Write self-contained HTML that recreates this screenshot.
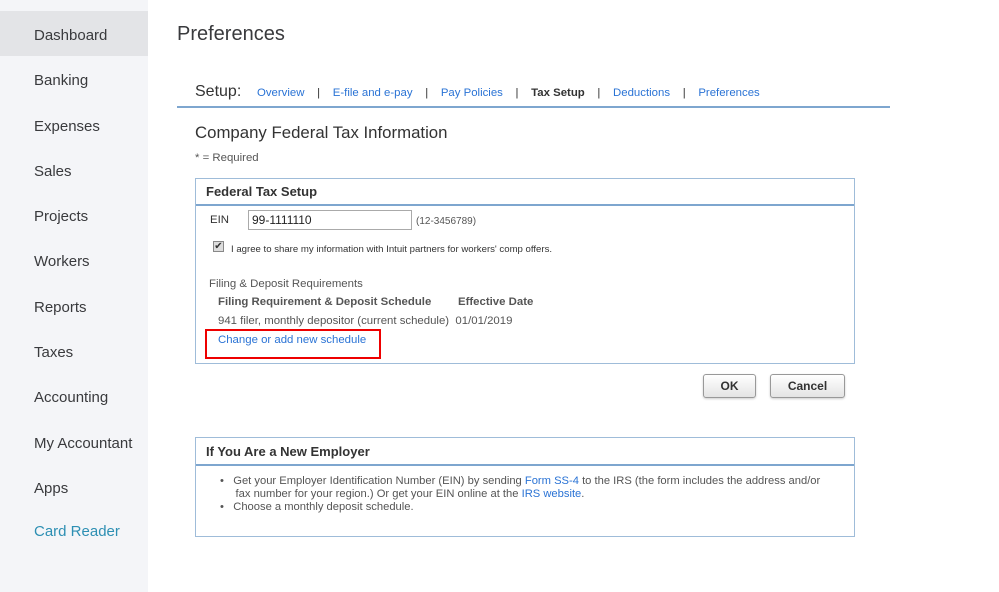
<!DOCTYPE html>
<html><head><style>
*{margin:0;padding:0;box-sizing:border-box}
body{width:999px;height:592px;background:#fff;font-family:"Liberation Sans",Arial,sans-serif;position:relative;overflow:hidden;color:#333}
.sb{position:absolute;left:0;top:0;width:148px;height:592px;background:#f4f5f8}
.sb .t{position:absolute;left:34px;font-size:15px;color:#393a3d;line-height:20px}
.hl{position:absolute;left:0;top:11px;width:148px;height:45px;background:#e3e4e7}
.a{position:absolute;white-space:nowrap}
.lk{color:#2a73d5}
.box{position:absolute;border:1px solid #9fbcd9}
.bh{position:absolute;left:0;right:0;top:0;border-bottom:2px solid #7ea6cf;font-weight:bold;font-size:13px;color:#333;padding-left:10px}
.s12{font-size:11.4px}
.btn{position:absolute;border:1px solid #999;border-radius:3px;background:linear-gradient(#fff,#e4e4e4);font-size:12px;font-weight:bold;text-align:center;line-height:22px;color:#333;box-shadow:0 1px 2px rgba(0,0,0,.2)}
</style></head><body>
<div class="sb">
<div class="hl"></div>
<div class="t" style="top:26px">Dashboard</div>
<div class="t" style="top:71px">Banking</div>
<div class="t" style="top:117px">Expenses</div>
<div class="t" style="top:162px">Sales</div>
<div class="t" style="top:207px">Projects</div>
<div class="t" style="top:252px">Workers</div>
<div class="t" style="top:298px">Reports</div>
<div class="t" style="top:343px">Taxes</div>
<div class="t" style="top:388px">Accounting</div>
<div class="t" style="top:434px">My Accountant</div>
<div class="t" style="top:479px">Apps</div>
<div class="t" style="top:522px;color:#2d8fb3">Card Reader</div>
</div>
<div class="a" style="left:177px;top:23px;font-size:20px;color:#393a3d">Preferences</div>
<div class="a" style="left:195px;top:83px;font-size:16px;color:#333">Setup:</div>
<div class="a" style="left:257px;top:87px;color:#333;font-size:11.4px"><span class="lk">Overview</span>&nbsp;&nbsp;&nbsp;&nbsp;|&nbsp;&nbsp;&nbsp;&nbsp;<span class="lk">E-file and e-pay</span>&nbsp;&nbsp;&nbsp;&nbsp;|&nbsp;&nbsp;&nbsp;&nbsp;<span class="lk">Pay Policies</span>&nbsp;&nbsp;&nbsp;&nbsp;|&nbsp;&nbsp;&nbsp;&nbsp;<b>Tax Setup</b>&nbsp;&nbsp;&nbsp;&nbsp;|&nbsp;&nbsp;&nbsp;&nbsp;<span class="lk">Deductions</span>&nbsp;&nbsp;&nbsp;&nbsp;|&nbsp;&nbsp;&nbsp;&nbsp;<span class="lk">Preferences</span></div>
<div class="a" style="left:177px;top:106px;width:713px;height:2px;background:#7ea6cf"></div>
<div class="a" style="left:195px;top:123px;font-size:16.8px;color:#333">Company Federal Tax Information</div>
<div class="a s12" style="left:195px;top:152px;color:#555">* = Required</div>
<div class="box" style="left:195px;top:178px;width:660px;height:186px">
<div class="bh" style="height:27px;line-height:26px">Federal Tax Setup</div>
<div class="a s12" style="left:14px;top:35px">EIN</div>
<div class="a" style="left:52px;top:31px;width:164px;height:20px;border:1px solid #aaa;font-size:12px;padding:2px 3px;color:#222">99-1111110</div>
<div class="a" style="left:220px;top:37px;font-size:10px;color:#555">(12-3456789)</div>
<div class="a" style="left:17px;top:62px;width:11px;height:11px;border:1px solid #888;background:#ddd;font-size:10px;line-height:9px;text-align:center">✔</div>
<div class="a" style="left:35px;top:65px;font-size:9.6px;color:#333">I agree to share my information with Intuit partners for workers' comp offers.</div>
<div class="a s12" style="left:13px;top:99px;color:#555">Filing &amp; Deposit Requirements</div>
<div class="a s12" style="left:22px;top:117px;font-weight:bold;color:#555">Filing Requirement &amp; Deposit Schedule</div>
<div class="a s12" style="left:262px;top:117px;font-weight:bold;color:#555">Effective Date</div>
<div class="a s12" style="left:22px;top:136px;color:#555">941 filer, monthly depositor (current schedule)&nbsp; 01/01/2019</div>
<div class="a" style="left:9px;top:150px;width:176px;height:30px;border:2px solid #e00"></div>
<div class="a s12 lk" style="left:22px;top:155px">Change or add new schedule</div>
</div>
<div class="btn" style="left:703px;top:374px;width:53px;height:24px">OK</div>
<div class="btn" style="left:770px;top:374px;width:75px;height:24px">Cancel</div>
<div class="box" style="left:195px;top:437px;width:660px;height:100px">
<div class="bh" style="height:28px;line-height:27px">If You Are a New Employer</div>
<div class="a" style="left:24px;top:37px;color:#555;line-height:13px;font-size:11.2px">•&nbsp;&nbsp; Get your Employer Identification Number (EIN) by sending <span class="lk">Form SS-4</span> to the IRS (the form includes the address and/or<br>&nbsp;&nbsp;&nbsp;&nbsp;&nbsp;fax number for your region.) Or get your EIN online at the <span class="lk">IRS website</span>.<br>•&nbsp;&nbsp; Choose a monthly deposit schedule.</div>
</div>
</body></html>
